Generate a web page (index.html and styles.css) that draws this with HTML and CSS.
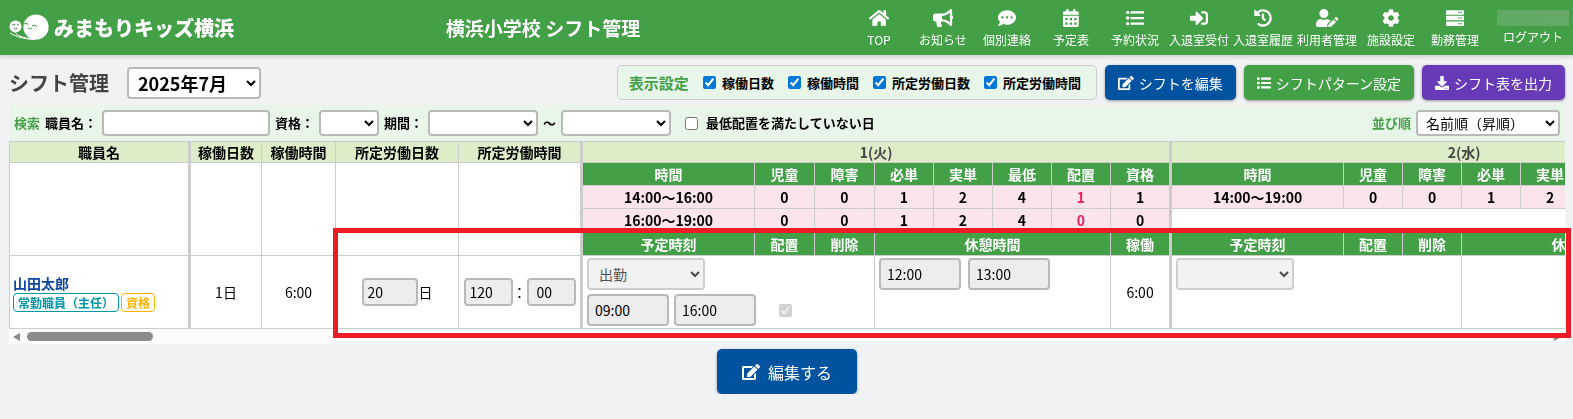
FILE: index.html
```
<!DOCTYPE html>
<html lang="ja">
<head>
<meta charset="UTF-8" />
<title>シフト管理</title>
<link rel="stylesheet" href="styles.css">
</head>
<body>
<header class="header">
	<a href="#" class="logo">
		<svg class="logo-mark" viewBox="0 0 40 27" aria-hidden="true">
			<circle cx="27" cy="13" r="12.6" fill="#fff"/>
			<circle cx="6.5" cy="12.5" r="6" fill="#fff"/>
			<path d="M1 19c7 4 14 6 25 6.500M6 18c2 4 8 6 18 7" fill="none" stroke="#fff"/>
			<path d="M3 11l2-1 1 1M8 11l2-1M4.500 14q2 2 4 0M15 10l3-1 1 2M23 12l3-1 2 2M19 14q2 2 4 0" fill="none" stroke="#43a047"/>
		</svg>
		<span>みまもりキッズ横浜</span>
	</a>
	<h1 class="site-title">横浜小学校 シフト管理</h1>
	<nav class="nav">
		<a href="#"><svg viewBox="0 0 576 512"><path d="M280.37 148.26L96 300.11V464a16 16 0 0 0 16 16l112.06-.29a16 16 0 0 0 15.92-16V368a16 16 0 0 1 16-16h64a16 16 0 0 1 16 16v95.64a16 16 0 0 0 16 16.05L464 480a16 16 0 0 0 16-16V300L295.67 148.26a12.19 12.19 0 0 0-15.3 0zM571.6 251.47L488 182.56V44.05a12 12 0 0 0-12-12h-56a12 12 0 0 0-12 12v72.61L318.47 43a48 48 0 0 0-61 0L4.34 251.47a12 12 0 0 0-1.6 16.9l25.5 31A12 12 0 0 0 45.15 301l235.22-193.74a12.19 12.19 0 0 1 15.3 0L530.9 301a12 12 0 0 0 16.9-1.6l25.5-31a12 12 0 0 0-1.7-16.93z"/></svg>TOP</a>
		<a href="#"><svg viewBox="0 0 576 512"><path d="M576 240c0-23.63-12.95-44.04-32-55.12V32.01C544 23.26 537.02 0 512 0c-7.12 0-14.19 2.38-19.98 7.02l-85.03 68.03C364.28 109.19 310.66 128 256 128H64c-35.35 0-64 28.65-64 64v96c0 35.35 28.65 64 64 64h33.7c-1.39 10.48-2.18 21.14-2.18 32 0 39.77 9.26 77.35 25.56 110.94 5.19 10.69 16.52 17.06 28.4 17.06h74.28c26.05 0 41.69-29.84 25.9-50.56-16.4-21.52-26.15-48.36-26.15-77.44 0-11.11 1.62-21.79 4.41-32H256c54.66 0 108.28 18.81 150.98 52.95l85.03 68.03a32.023 32.023 0 0 0 19.98 7.02c24.92 0 32-22.78 32-32V295.13C563.05 284.04 576 263.63 576 240zm-96 141.42l-33.05-26.44C392.95 311.78 325.12 288 256 288v-96c69.12 0 136.95-23.78 190.95-66.98L480 98.58v282.84z"/></svg>お知らせ</a>
		<a href="#"><svg viewBox="0 0 512 512"><path d="M256 32C114.6 32 0 125.1 0 240c0 49.6 21.4 95 57 130.7C44.5 421.1 2.7 466 2.2 466.5c-2.2 2.3-2.8 5.7-1.5 8.7S4.8 480 8 480c66.3 0 116-31.8 140.6-51.4 32.7 12.3 69 19.4 107.4 19.4 141.4 0 256-93.1 256-208S397.4 32 256 32zM128 272c-17.7 0-32-14.3-32-32s14.3-32 32-32 32 14.3 32 32-14.3 32-32 32zm128 0c-17.7 0-32-14.3-32-32s14.3-32 32-32 32 14.3 32 32-14.3 32-32 32zm128 0c-17.7 0-32-14.3-32-32s14.3-32 32-32 32 14.3 32 32-14.3 32-32 32z"/></svg>個別連絡</a>
		<a href="#"><svg viewBox="0 0 448 512"><path fill-rule="evenodd" d="M0 464c0 26.500 21.500 48 48 48h352c26.500 0 48-21.500 48-48V192H0zM64 256h64v64H64zM192 256h64v64h-64zM320 256h64v64h-64zM64 384h64v64H64zM192 384h64v64h-64zM320 384h64v64h-64zM400 64h-48V16c0-8.800-7.200-16-16-16h-32c-8.800 0-16 7.200-16 16v48H160V16c0-8.800-7.200-16-16-16h-32c-8.800 0-16 7.200-16 16v48H48C21.500 64 0 85.500 0 112v48h448v-48c0-26.500-21.500-48-48-48z"/></svg>予定表</a>
		<a href="#"><svg viewBox="0 0 512 512"><circle cx="48" cy="96" r="48"/><circle cx="48" cy="256" r="48"/><circle cx="48" cy="416" r="48"/><rect x="128" y="64" width="384" height="64" rx="16"/><rect x="128" y="224" width="384" height="64" rx="16"/><rect x="128" y="384" width="384" height="64" rx="16"/></svg>予約状況</a>
		<a href="#"><svg viewBox="0 0 512 512"><path d="M416 448h-84c-6.600 0-12-5.400-12-12v-40c0-6.600 5.400-12 12-12h84c17.700 0 32-14.300 32-32V160c0-17.700-14.300-32-32-32h-84c-6.600 0-12-5.400-12-12V76c0-6.600 5.400-12 12-12h84c53 0 96 43 96 96v192c0 53-43 96-96 96zm-47-201L201 79c-15-15-41-4.500-41 17v96H24c-13.300 0-24 10.700-24 24v96c0 13.300 10.700 24 24 24h136v96c0 21.500 26 32 41 17l168-168c9.300-9.400 9.300-24.600 0-34z"/></svg>入退室受付</a>
		<a href="#"><svg viewBox="0 0 512 512"><path d="M504 255.531c.253 136.640-111.180 248.372-247.820 248.468-59.015.042-113.223-20.530-155.822-54.911-11.077-8.940-11.905-25.541-1.839-35.607l11.267-11.267c8.609-8.609 22.353-9.551 31.891-1.984C173.062 425.135 212.781 440 256 440c101.705 0 184-82.311 184-184 0-101.705-82.311-184-184-184-48.814 0-93.149 18.969-126.068 49.932l50.754 50.754c10.080 10.080 2.941 27.314-11.313 27.314H24c-8.837 0-16-7.163-16-16V38.627c0-14.254 17.234-21.393 27.314-11.314l49.372 49.372C129.209 34.136 189.552 8 256 8c136.810 0 247.747 110.780 248 247.531zm-180.912 78.784l9.823-12.630c8.138-10.463 6.253-25.542-4.210-33.679L288 256.349V152c0-13.255-10.745-24-24-24h-16c-13.255 0-24 10.745-24 24v135.651l65.409 50.874c10.463 8.137 25.541 6.253 33.679-4.210z"/></svg>入退室履歴</a>
		<a href="#"><svg viewBox="0 0 640 512"><path d="M224 256c70.700 0 128-57.300 128-128S294.700 0 224 0 96 57.300 96 128s57.300 128 128 128zm89.600 32h-16.700c-22.200 10.200-46.900 16-72.900 16s-50.600-5.800-72.900-16h-16.700C60.200 288 0 348.200 0 422.400V464c0 26.500 21.500 48 48 48h274.900c-2.400-6.800-3.400-14-2.600-21.300l6.800-60.900 1.200-11.100 7.900-7.900 77.300-77.300c-24.500-27.700-60-45.500-99.900-45.500zm45.300 145.300l-6.800 61c-1.100 10.200 7.500 18.800 17.600 17.600l60.900-6.800 137.900-137.900-71.700-71.700-137.900 137.800zM633 268.900L595.100 231c-9.300-9.300-24.500-9.300-33.800 0l-37.800 37.800-4.100 4.100 71.800 71.700 41.800-41.800c9.300-9.400 9.300-24.500 0-33.900z"/></svg>利用者管理</a>
		<a href="#"><svg viewBox="0 0 512 512"><path d="M487.4 315.7l-42.6-24.6c4.3-23.2 4.3-47 0-70.2l42.6-24.6c4.9-2.8 7.1-8.6 5.5-14-11.1-35.6-30-67.8-54.7-94.6-3.8-4.1-10-5.1-14.8-2.3L380.8 110c-17.9-15.4-38.5-27.3-60.8-35.1V25.8c0-5.6-3.9-10.5-9.4-11.7-36.7-8.2-74.3-7.8-109.2 0-5.5 1.2-9.4 6.1-9.4 11.7V75c-22.2 7.9-42.8 19.8-60.8 35.1L88.7 85.5c-4.9-2.8-11-1.9-14.8 2.3-24.7 26.7-43.6 58.9-54.7 94.6-1.7 5.4.6 11.2 5.5 14L67.3 221c-4.3 23.2-4.3 47 0 70.2l-42.6 24.6c-4.9 2.8-7.1 8.6-5.5 14 11.1 35.6 30 67.8 54.7 94.6 3.8 4.1 10 5.1 14.8 2.3l42.6-24.6c17.9 15.4 38.5 27.3 60.8 35.1v49.2c0 5.6 3.9 10.5 9.4 11.7 36.7 8.2 74.3 7.8 109.2 0 5.5-1.2 9.4-6.1 9.4-11.7v-49.2c22.2-7.9 42.8-19.8 60.8-35.1l42.6 24.6c4.9 2.8 11 1.9 14.8-2.3 24.7-26.7 43.6-58.9 54.7-94.6 1.5-5.5-.7-11.3-5.6-14.1zM256 336c-44.1 0-80-35.9-80-80s35.9-80 80-80 80 35.9 80 80-35.9 80-80 80z"/></svg>施設設定</a>
		<a href="#"><svg viewBox="0 0 512 512"><rect y="32" width="512" height="128" rx="24"/><rect y="192" width="512" height="128" rx="24"/><rect y="352" width="512" height="128" rx="24"/><g fill="#43a047"><circle cx="368" cy="96" r="22"/><circle cx="432" cy="96" r="22"/><circle cx="368" cy="256" r="22"/><circle cx="432" cy="256" r="22"/><circle cx="368" cy="416" r="22"/><circle cx="432" cy="416" r="22"/></g></svg>勤務管理</a>
	</nav>
	<div class="account">
		<span class="account-name"></span>
		<a href="#">ログアウト</a>
	</div>
</header>

<main class="main">
	<div class="toolbar">
		<h2 class="page-title">シフト管理</h2>
		<select class="month" aria-label="対象月"><option>2025年7月</option></select>
		<div class="display-setting">
			<span class="display-title">表示設定</span>
			<label><input type="checkbox" checked />稼働日数</label>
			<label><input type="checkbox" checked />稼働時間</label>
			<label><input type="checkbox" checked />所定労働日数</label>
			<label><input type="checkbox" checked />所定労働時間</label>
		</div>
		<button type="button" class="btn btn-blue"><svg viewBox="0 0 576 512"><path d="M402.6 83.2l90.2 90.2c3.8 3.8 3.8 10 0 13.8L274.4 405.6l-92.8 10.3c-12.4 1.4-22.9-9.1-21.5-21.5l10.3-92.8L388.8 83.2c3.8-3.8 10-3.8 13.8 0zm162-22.9l-48.8-48.8c-15.2-15.2-39.9-15.2-55.2 0l-35.4 35.4c-3.8 3.8-3.8 10 0 13.8l90.2 90.2c3.8 3.8 10 3.8 13.8 0l35.4-35.4c15.2-15.3 15.2-40 0-55.2zM384 346.2V448H64V128h229.8c3.2 0 6.2-1.3 8.5-3.5l40-40c7.6-7.6 2.2-20.5-8.500-20.5H48C21.500 64 0 85.500 0 112v352c0 26.500 21.500 48 48 48h352c26.500 0 48-21.500 48-48V306.200c0-10.700-12.900-16-20.500-8.500l-40 40c-2.200 2.300-3.500 5.300-3.500 8.500z"/></svg>シフトを編集</button>
		<button type="button" class="btn btn-green"><svg viewBox="0 0 512 512"><rect y="48" width="96" height="96" rx="16"/><rect y="208" width="96" height="96" rx="16"/><rect y="368" width="96" height="96" rx="16"/><rect x="144" y="56" width="368" height="80" rx="16"/><rect x="144" y="216" width="368" height="80" rx="16"/><rect x="144" y="376" width="368" height="80" rx="16"/></svg>シフトパターン設定</button>
		<button type="button" class="btn btn-purple"><svg viewBox="0 0 512 512"><path d="M216 0h80c13.300 0 24 10.700 24 24v168h87.700c17.800 0 26.700 21.500 14.100 34.100L269.700 378.300c-7.500 7.500-19.800 7.500-27.300 0L90.100 226.100c-12.600-12.600-3.700-34.100 14.100-34.100H192V24c0-13.300 10.700-24 24-24zm296 376v112c0 13.300-10.700 24-24 24H24c-13.300 0-24-10.700-24-24V376c0-13.300 10.700-24 24-24h146.700l49 49c20.100 20.100 52.500 20.100 72.600 0l49-49H488c13.300 0 24 10.700 24 24zm-124 88c0-11-9-20-20-20s-20 9-20 20 9 20 20 20 20-9 20-20zm64 0c0-11-9-20-20-20s-20 9-20 20 9 20 20 20 20-9 20-20z"/></svg>シフト表を出力</button>
	</div>

	<form class="search">
		<span class="search-title">検索</span>
		<label for="staff">職員名：</label>
		<input type="text" id="staff" class="field staff" value=""/>
		<label for="license">資格：</label>
		<select id="license" class="field license"><option></option></select>
		<label for="from">期間：</label>
		<select id="from" class="field period"><option></option></select>
		<span>～</span>
		<select class="field period" aria-label="期間の終わり"><option></option></select>
		<label class="shortage"><input type="checkbox" />最低配置を満たしていない日</label>
		<label for="sort" class="search-title sort-title">並び順</label>
		<select id="sort" class="field sort"><option>名前順（昇順）</option></select>
	</form>

	<div class="table-wrap">
		<table class="shift">
			<colgroup>
				<col class="c-name"><col class="c-days"><col class="c-hours"><col class="c-rule"><col class="c-rule-last">
				<col class="c-time"><col span="2" class="c-child"><col span="4" class="c-count"><col class="c-last">
				<col class="c-time"><col span="6" class="c-count"><col class="c-last">
			</colgroup>
			<thead>
				<tr class="days">
					<th class="thick">職員名</th>
					<th>稼働日数</th>
					<th>稼働時間</th>
					<th>所定労働日数</th>
					<th class="thick">所定労働時間</th>
					<th class="date thick" colspan="8">1(火)</th>
					<th class="date thick" colspan="8">2(水)</th>
				</tr>
				<tr class="sub">
					<td class="thick" rowspan="4"></td>
					<td rowspan="4"></td>
					<td rowspan="4"></td>
					<td rowspan="4"></td>
					<td class="thick" rowspan="4"></td>
					<th>時間</th><th>児童</th><th>障害</th><th>必単</th><th>実単</th><th>最低</th><th>配置</th><th class="thick">資格</th>
					<th>時間</th><th>児童</th><th>障害</th><th>必単</th><th>実単</th><th>最低</th><th>配置</th><th class="thick">資格</th>
				</tr>
				<tr class="count">
					<td>14:00～16:00</td><td>0</td><td>0</td><td>1</td><td>2</td><td>4</td><td class="short">1</td><td class="thick">1</td>
					<td>14:00～19:00</td><td>0</td><td>0</td><td>1</td><td>2</td><td>4</td><td class="short">0</td><td class="thick">0</td>
				</tr>
				<tr class="count">
					<td>16:00～19:00</td><td>0</td><td>0</td><td>1</td><td>2</td><td>4</td><td class="short">0</td><td class="thick">0</td>
					<td class="blank thick" colspan="8"></td>
				</tr>
				<tr class="sub plan-head">
					<th>予定時刻</th><th>配置</th><th>削除</th><th colspan="4">休憩時間</th><th class="thick">稼働</th>
					<th>予定時刻</th><th>配置</th><th>削除</th><th colspan="4">休憩時間</th><th class="thick">稼働</th>
				</tr>
			</thead>
			<tbody>
				<tr class="person">
					<td class="name thick">
						<a href="#">山田太郎</a>
						<div class="badges"><span class="badge badge-job">常勤職員（主任）</span><span class="badge badge-license">資格</span></div>
					</td>
					<td>1日</td>
					<td>6:00</td>
					<td><div class="inline"><input type="text" class="field num-days" aria-label="所定労働日数" value="20" readonly />日</div></td>
					<td class="thick"><div class="inline hm"><input type="text" class="field num" aria-label="所定労働 時" value="120" readonly />：<input type="text" class="field num num-min" aria-label="所定労働 分" value="00" readonly /></div></td>
					<td class="plan" colspan="3">
						<div class="plan-grid">
							<select class="field kind" aria-label="勤務区分" disabled><option>出勤</option></select>
							<input type="text" class="field clock" aria-label="開始時刻" value="09:00" readonly />
							<input type="text" class="field clock" aria-label="終了時刻" value="16:00" readonly />
							<input type="checkbox" class="placed" aria-label="配置" checked disabled />
						</div>
					</td>
					<td class="plan" colspan="4">
						<div class="break">
							<input type="text" class="field clock" aria-label="休憩開始" value="12:00" readonly />
							<input type="text" class="field clock" aria-label="休憩終了" value="13:00" readonly />
						</div>
					</td>
					<td class="thick">6:00</td>
					<td class="plan" colspan="3">
						<div class="plan-grid">
							<select class="field kind" aria-label="勤務区分" disabled><option></option></select>
						</div>
					</td>
					<td colspan="4"></td>
					<td class="thick"></td>
				</tr>
			</tbody>
		</table>
	</div>
	<div class="scrollbar">
		<span class="arrow arrow-left"></span>
		<span class="thumb"></span>
		<span class="arrow arrow-right"></span>
	</div>

	<button type="button" class="btn btn-blue btn-edit"><svg viewBox="0 0 576 512"><path d="M402.6 83.2l90.2 90.2c3.8 3.8 3.8 10 0 13.8L274.4 405.6l-92.8 10.3c-12.4 1.4-22.9-9.1-21.5-21.5l10.3-92.8L388.8 83.2c3.8-3.8 10-3.8 13.8 0zm162-22.9l-48.8-48.8c-15.2-15.2-39.9-15.2-55.2 0l-35.4 35.4c-3.8 3.8-3.8 10 0 13.8l90.2 90.2c3.8 3.8 10 3.8 13.8 0l35.4-35.4c15.2-15.3 15.2-40 0-55.2zM384 346.2V448H64V128h229.8c3.2 0 6.2-1.3 8.5-3.5l40-40c7.6-7.6 2.2-20.5-8.500-20.5H48C21.500 64 0 85.500 0 112v352c0 26.500 21.500 48 48 48h352c26.500 0 48-21.500 48-48V306.200c0-10.700-12.900-16-20.500-8.500l-40 40c-2.200 2.300-3.500 5.300-3.500 8.500z"/></svg>編集する</button>
</main>

<div class="highlight"></div>
</body>
</html>
```

FILE: styles.css
```
* {
	box-sizing: border-box;
}

body {
	margin: 0;
	background-color: #f1f2f4;
	color: #000;
	font: 14px/20px "Noto Sans CJK JP", sans-serif;
}

h1, h2 {
	margin: 0;
}

a {
	text-decoration: none;
}

svg {
	fill: currentColor;
}

input, select, button {
	margin: 0;
	font-family: inherit;
}

input[type=checkbox] {
	width: 13px;
	height: 13px;
	accent-color: #0078d7;
}

/* header */
.header {
	display: flex;
	align-items: center;
	height: 55px;
	padding: 0 4px 0 9px;
	background-color: #43a047;
	box-shadow: 0 2px 4px rgba(0, 0, 0, .15);
	color: #fff;
}

.header a {
	color: #fff;
}

.logo {
	display: flex;
	align-items: center;
	gap: 5px;
	min-width: 230px;
	font-size: 20px;
	font-weight: 900;
	line-height: 28px;
}

.logo-mark {
	width: 40px;
	height: 27px;
}

.site-title {
	flex: 1;
	font-size: 19px;
	line-height: 28px;
	text-align: center;
}

.nav {
	display: flex;
}

.nav a {
	display: flex;
	flex-direction: column;
	align-items: center;
	gap: 4px;
	width: 64px;
	padding-top: 2px;
	font-size: 12px;
	line-height: 18px;
	white-space: nowrap;
}

.nav svg {
	height: 18px;
}

.account {
	display: flex;
	flex-direction: column;
	align-items: center;
	gap: 2px;
	width: 72px;
	margin-left: 10px;
	font-size: 12px;
	line-height: 18px;
}

.account-name {
	width: 100%;
	height: 16px;
	background: linear-gradient(10deg, #5cac5f, #6aa76c);
}

/* toolbar */
.main {
	padding: 10px 8px 0 9px;
}

.toolbar {
	display: flex;
	align-items: center;
	gap: 8px;
	height: 35px;
}

.page-title {
	color: #444;
	font-size: 20px;
	font-weight: bold;
}

.month {
	width: 134px;
	height: 32px;
	margin: 0 auto 0 10px;
	padding: 0 5px;
	background-color: #fff;
	border: 2px solid #b9b9b9;
	border-radius: 4px;
	color: #000;
	font-size: 18px;
	font-weight: bold;
}

.display-setting {
	display: flex;
	align-items: center;
	gap: 14px;
	height: 35px;
	padding: 0 15px 0 11px;
	background-color: #e8f5e9;
	border: 1px solid #ccc;
	border-radius: 5px;
	font-size: 13px;
	font-weight: bold;
}

.display-setting label {
	display: flex;
	align-items: center;
	gap: 6px;
}

.display-title {
	color: #43a047;
	font-size: 15px;
}

.btn {
	display: flex;
	align-items: center;
	justify-content: center;
	gap: 5px;
	height: 35px;
	padding: 0 13px;
	border: none;
	border-radius: 5px;
	box-shadow: 0 1px 3px rgba(0, 0, 0, .4);
	color: #fff;
	font-size: 14px;
}

.btn svg {
	height: 14px;
}

.btn-blue {
	background-color: #01529f;
}

.btn-green {
	background-color: #43a047;
}

.btn-purple {
	background-color: #673ab7;
}

/* search */
.search {
	display: flex;
	align-items: center;
	gap: 5px;
	height: 36px;
	margin-top: 5px;
	padding: 0 5px;
	background-color: #e8f5e9;
	font-size: 13px;
	font-weight: bold;
}

.search-title {
	color: #43a047;
}

.field {
	height: 26px;
	padding: 0 4px;
	background-color: #fff;
	border: 2px solid #b9b9b9;
	border-radius: 4px;
	color: #000;
	font-size: 14px;
}

.staff {
	width: 168px;
}

.license {
	width: 60px;
}

.period {
	width: 110px;
}

.shortage {
	display: flex;
	align-items: center;
	gap: 8px;
	margin-left: 9px;
}

.sort-title {
	margin-left: auto;
}

.sort {
	width: 144px;
}

/* shift table */
.table-wrap {
	overflow-x: auto;
	scrollbar-width: none;
	background-color: #fff;
}

.shift {
	width: 1750px;
	table-layout: fixed;
	border-collapse: separate;
	border-spacing: 0;
	border-left: 1px solid #ccc;
	border-top: 1px solid #ccc;
}

.c-name {
	width: 181px;
}

.c-days {
	width: 71px;
}

.c-hours {
	width: 74px;
}

.c-rule {
	width: 123px;
}

.c-rule-last {
	width: 124px;
}

.c-time {
	width: 172px;
}

.c-child {
	width: 60px;
}

.c-count {
	width: 59px;
}

.c-last {
	width: 61px;
}

.shift th, .shift td {
	height: 23px;
	padding: 0;
	border-right: 1px solid #ccc;
	border-bottom: 1px solid #ccc;
	line-height: 20px;
	text-align: center;
}

.shift .thick {
	border-right-width: 3px;
}

.shift .days th {
	height: 21px;
	background-color: #dcedc8;
}

.shift .days .date {
	color: #444;
}

.shift .sub th {
	background-color: #43a047;
	color: #fff;
}

.shift .plan-head th {
	height: 24px;
}

.shift .count td {
	background-color: #fce4ec;
	font-weight: bold;
}

.shift .count .short {
	color: #e91e63;
}

.shift .count .blank {
	background-color: #fff;
}

.shift .person td {
	height: 73px;
}

.shift .person .name {
	padding-left: 3px;
	text-align: left;
}

.name a {
	color: #0d47a1;
	font-weight: bold;
}

.badges {
	display: flex;
	gap: 2px;
}

.badge {
	padding: 0 4px;
	border: 1px solid;
	border-radius: 4px;
	font-size: 12px;
	font-weight: bold;
	line-height: 17px;
}

.badge-job {
	color: #0097a7;
}

.badge-license {
	color: #ffb300;
}

.inline {
	display: flex;
	align-items: center;
	justify-content: center;
	gap: 1px;
}

.person .field {
	background-color: #ededed;
}

.person .num-days, .person .num {
	height: 28px;
}

.num-days {
	width: 56px;
}

.hm {
	gap: 0;
}

.num {
	width: 49px;
}

.num-min {
	padding-left: 8px;
}

.shift .person .plan {
	padding: 2px 4px;
	vertical-align: top;
	text-align: left;
}

.plan-grid {
	display: grid;
	grid-template-columns: 82px 82px 48px;
	gap: 4px 5px;
	align-items: center;
}

.person .kind, .person .clock {
	height: 32px;
	padding: 0 6px;
}

.person .kind {
	grid-column: 1 / 4;
	width: 118px;
}

.clock {
	width: 82px;
}

.placed {
	justify-self: center;
}

.break {
	display: flex;
	gap: 7px;
}

/* horizontal scroll bar */
.scrollbar {
	display: flex;
	align-items: center;
	height: 15px;
	padding: 0 4px;
	background-color: #fcfcfc;
}

.arrow {
	border: 4px solid transparent;
}

.arrow-left {
	border-left-width: 0;
	border-right: 7px solid #8b8b8b;
}

.arrow-right {
	margin-left: auto;
	border-right-width: 0;
	border-left: 7px solid #8b8b8b;
}

.thumb {
	width: 126px;
	height: 9px;
	margin-left: 7px;
	background-color: #8b8b8b;
	border-radius: 5px;
}

.btn-edit {
	gap: 8px;
	width: 140px;
	height: 45px;
	margin: 5px auto 0;
	font-size: 16px;
}

.btn-edit svg {
	height: 16px;
}

/* frame laid over the editable part of the row */
.highlight {
	position: absolute;
	top: 228px;
	left: 333px;
	right: 2px;
	height: 110px;
	border: 5px solid #ed1c24;
	pointer-events: none;
}
```
